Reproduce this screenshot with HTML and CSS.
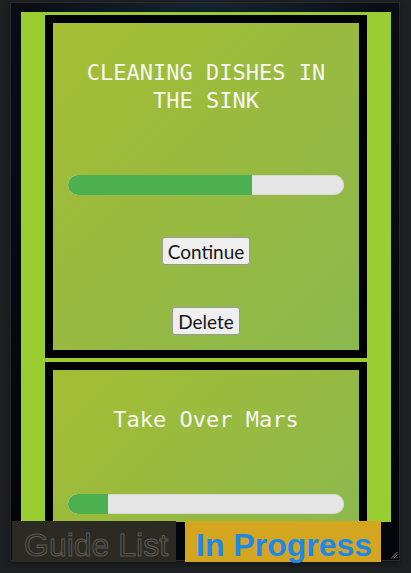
FILE: index.html
```html
<!DOCTYPE html>
<html lang="en">
<head>
<meta charset="utf-8">
<title>Guides</title>
<link rel="stylesheet" href="styles.css">
</head>
<body>
  <div class="window">
    <div class="scroller">
      <section class="card">
        <h2 class="card-title">CLEANING DISHES IN THE SINK</h2>
        <div class="progress"><div class="progress-fill" style="width: 66.7%"></div></div>
        <button class="btn btn-continue">Continue</button>
        <button class="btn btn-delete">Delete</button>
      </section>
      <section class="card">
        <h2 class="card-title">Take Over Mars</h2>
        <div class="progress"><div class="progress-fill" style="width: 14.5%"></div></div>
      </section>
    </div>
    <nav class="tabs">
      <div class="tab tab-guides">Guide List</div>
      <div class="tab tab-progress">In Progress</div>
    </nav>
    <svg class="grip" width="8" height="8" viewBox="0 0 8 8">
      <path d="M7.5 1 L1 7.5 M7.5 3.5 L3.5 7.5 M7.5 6 L6 7.5" stroke="#8a8a8a" stroke-width="1" fill="none"/>
    </svg>
  </div>
</body>
</html>
```

FILE: styles.css
```css
html, body {
  margin: 0;
  padding: 0;
}

body {
  background: #1f2023;
  padding: 3px 0 0 11px;
  height: 573px;
  box-sizing: border-box;
  overflow: hidden;
}

/* dark frame around the scrolling list */
.window {
  position: relative;
  width: 388px;
  height: 557px;
  box-sizing: border-box;
  padding: 9px 8px 0 10px;
  background:
    radial-gradient(ellipse 180px 30px at 50% 0, rgba(30, 60, 80, 0.55), rgba(30, 60, 80, 0) 100%),
    linear-gradient(#0a0e14, #03050a);
  box-shadow: 0 0 0 1px #2a2b2f, 0 3px 6px rgba(0, 0, 0, 0.55);
}

.scroller {
  height: 510px;
  overflow: hidden;
  background: #9acd32;
  padding: 3px 24px 0;
  box-sizing: border-box;
}

.card {
  border: 8px solid #000;
  margin-bottom: 4px;
  background: linear-gradient(135deg, #a6bd32 0%, #98ba40 50%, #8bb94e 100%);
  display: flex;
  flex-direction: column;
  align-items: center;
  padding: 36px 0 15px;
}

.card-title {
  margin: 0;
  padding: 0 20px;
  font-family: "DejaVu Sans Mono", monospace;
  font-weight: normal;
  font-size: 22px;
  line-height: 28px;
  color: #f6f6f2;
  text-align: center;
}

.progress {
  align-self: stretch;
  margin: 60px 15px 0;
  height: 20px;
  border-radius: 10px;
  background: #e6e6e6;
  overflow: hidden;
  box-shadow: inset 0 0 0 1px #d6d6d6;
}

.progress-fill {
  height: 100%;
  background: #4caf50;
}

.btn {
  margin-top: 42px;
  height: 28px;
  padding: 0 5px;
  font-family: "Lato", "Liberation Sans", sans-serif;
  font-size: 19px;
  color: #161616;
  background: #efefef;
  border: 1px solid #9a9a9a;
  border-radius: 3px;
}

/* bottom tab bar sits over the list */
.tabs {
  position: absolute;
  left: 1px;
  top: 518px;
  display: flex;
  gap: 9px;
}

.tab {
  height: 41px;
  line-height: 49px;
  padding: 0 11px 0 12px;
  font-family: "Liberation Sans", Arial, sans-serif;
  font-size: 32px;
  white-space: nowrap;
}

.tab-guides {
  background: #2b2a23;
  color: transparent;
  -webkit-text-stroke: 1px #5a5a56;
  width: 141px;
}

.tab-progress {
  background: #d4a51f;
  color: #1e88ea;
  font-weight: bold;
  padding: 0 11px;
  width: 174px;
}

.grip {
  position: absolute;
  right: 1px;
  bottom: 1px;
}
```
